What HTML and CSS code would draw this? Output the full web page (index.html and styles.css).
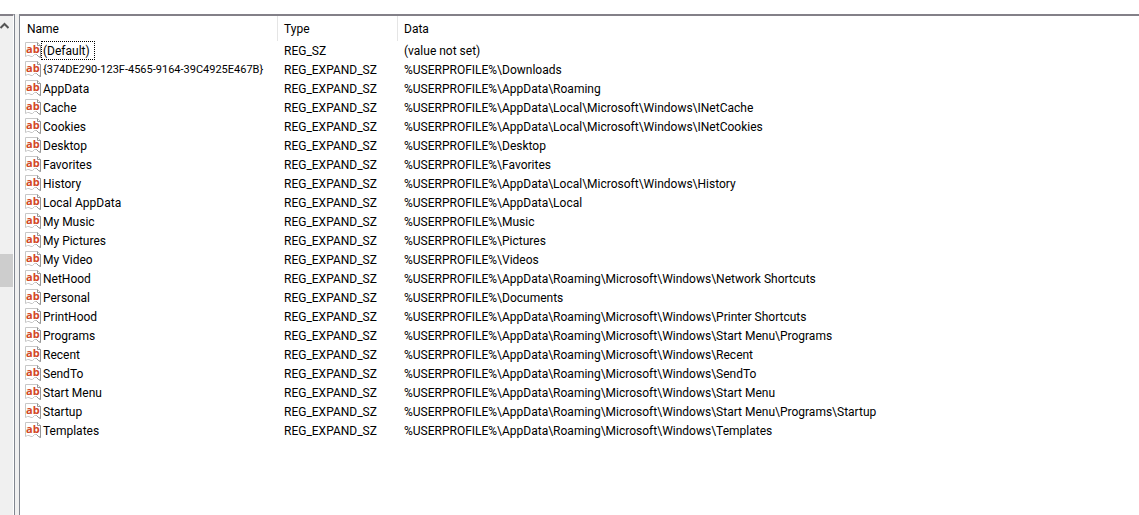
FILE: index.html
```
<!DOCTYPE html>
<html lang="en">
<head>
    <meta charset="UTF-8">
    <meta name="viewport" content="width=device-width, initial-scale=1.0">
    <title>Registry Editor</title>
    <link rel="stylesheet" href="styles.css">
</head>
<body>
    <!-- Shared icon for string values -->
    <svg class="sprite" aria-hidden="true">
        <symbol id="string-icon" viewBox="0 0 16 17">
            <path d="M0.5 0.5H12.5L15.5 3.5V15.5L13.5 14.5L11.5 12.5H9.5L7.5 14.5H6L4 13.5H2.5L0.5 14.5Z" fill="#fff" stroke="#c8c8c8"/>
            <path d="M12.5 0.5V3.5H15.5V15.5L13.5 14.5L11.5 12.5" fill="none" stroke="#969696"/>
            <text x="1" y="11" class="icon-text">ab</text>
        </symbol>
    </svg>

    <div class="window">
        <div class="tree-scroll">
            <button class="scroll-up" aria-label="Scroll up">
                <svg width="9" height="8" viewBox="0 0 9 8"><path d="M0.5 6L4.5 2L8.5 6" fill="none" stroke="#555" stroke-width="2"/></svg>
            </button>
            <div class="track">
                <div class="thumb"></div>
            </div>
        </div>
        <div class="splitter"></div>

        <div class="values">
            <table class="list">
                <thead>
                    <tr><th class="name">Name</th><th class="type">Type</th><th>Data</th></tr>
                </thead>
                <tbody id="rows"></tbody>
            </table>
        </div>
    </div>

    <script>
        const profile = '%USERPROFILE%\\';
        const roaming = profile + 'AppData\\Roaming\\Microsoft\\Windows\\';
        const local = profile + 'AppData\\Local\\Microsoft\\Windows\\';

        const values = [
            ['(Default)', 'REG_SZ', '(value not set)'],
            ['{374DE290-123F-4565-9164-39C4925E467B}', 'REG_EXPAND_SZ', profile + 'Downloads'],
            ['AppData', 'REG_EXPAND_SZ', profile + 'AppData\\Roaming'],
            ['Cache', 'REG_EXPAND_SZ', local + 'INetCache'],
            ['Cookies', 'REG_EXPAND_SZ', local + 'INetCookies'],
            ['Desktop', 'REG_EXPAND_SZ', profile + 'Desktop'],
            ['Favorites', 'REG_EXPAND_SZ', profile + 'Favorites'],
            ['History', 'REG_EXPAND_SZ', local + 'History'],
            ['Local AppData', 'REG_EXPAND_SZ', profile + 'AppData\\Local'],
            ['My Music', 'REG_EXPAND_SZ', profile + 'Music'],
            ['My Pictures', 'REG_EXPAND_SZ', profile + 'Pictures'],
            ['My Video', 'REG_EXPAND_SZ', profile + 'Videos'],
            ['NetHood', 'REG_EXPAND_SZ', roaming + 'Network Shortcuts'],
            ['Personal', 'REG_EXPAND_SZ', profile + 'Documents'],
            ['PrintHood', 'REG_EXPAND_SZ', roaming + 'Printer Shortcuts'],
            ['Programs', 'REG_EXPAND_SZ', roaming + 'Start Menu\\Programs'],
            ['Recent', 'REG_EXPAND_SZ', roaming + 'Recent'],
            ['SendTo', 'REG_EXPAND_SZ', roaming + 'SendTo'],
            ['Start Menu', 'REG_EXPAND_SZ', roaming + 'Start Menu'],
            ['Startup', 'REG_EXPAND_SZ', roaming + 'Start Menu\\Programs\\Startup'],
            ['Templates', 'REG_EXPAND_SZ', roaming + 'Templates']
        ];

        function labelClass(name, index) {
            if (index === 0) return 'label focused';
            return name.startsWith('{') ? 'label guid' : 'label';
        }

        document.getElementById('rows').innerHTML = values.map(([name, type, data], i) => `
            <tr>
                <td><div class="entry">
                    <svg class="icon"><use href="#string-icon"/></svg>
                    <span class="${labelClass(name, i)}">${name}</span>
                </div></td>
                <td>${type}</td>
                <td>${data}</td>
            </tr>`).join('');
    </script>
</body>
</html>
```

FILE: styles.css
```
body {
    margin: 0;
    background: #fff;
    color: #000;
    font-family: "Segoe UI", Roboto, "Open Sans", sans-serif;
    font-size: 12px;
}
.sprite {
    display: none;
}
.window {
    display: flex;
    box-sizing: border-box;
    height: 100vh;
    padding-top: 14px;
}
.tree-scroll {
    display: flex;
    flex-direction: column;
    width: 13px;
    border-top: 2px solid #838088;
    border-right: 1px solid #fff;
    background: #f0f0f0;
}
.scroll-up {
    display: flex;
    align-items: center;
    height: 20px;
    padding: 0;
    border: none;
    background: none;
}
.track {
    display: grid;
    flex: 1;
    grid-template-rows: 218fr 33fr 228fr;
}
.thumb {
    grid-row: 2;
    background: #cdcdcd;
}
.splitter {
    width: 4px;
    border-left: 1px solid #828790;
    border-right: 1px solid #828790;
    background: #f0f0f0;
}
.values {
    flex: 1;
    overflow: hidden;
    border-top: 2px solid #838088;
}
.list {
    width: 100%;
    table-layout: fixed;
    border-collapse: separate;
    border-spacing: 0;
}
th {
    height: 25px;
    padding: 0 6px;
    font-weight: normal;
    text-align: left;
    background: linear-gradient(#e5e5e5, #e5e5e5) right / 1px 100% no-repeat;
}
th:last-child {
    background: none;
}
.name {
    width: 245px;
    padding-left: 7px;
}
.type {
    width: 108px;
}
td {
    padding: 1px 6px 0;
    line-height: 18px;
    white-space: nowrap;
}
td:first-child {
    padding: 0 0 0 5px;
}
.entry {
    display: flex;
    align-items: center;
    height: 19px;
}
.icon {
    flex-shrink: 0;
    width: 16px;
    height: 17px;
}
.icon-text {
    fill: #d24726;
    font-family: "Open Sans", sans-serif;
    font-size: 11px;
    font-weight: bold;
}
.label {
    padding: 1px 4px 0 1px;
    border: 1px solid transparent;
    line-height: 16px;
}
.guid {
    font-size: 11px;
}
.focused {
    border: 1px dotted #000;
}
```
